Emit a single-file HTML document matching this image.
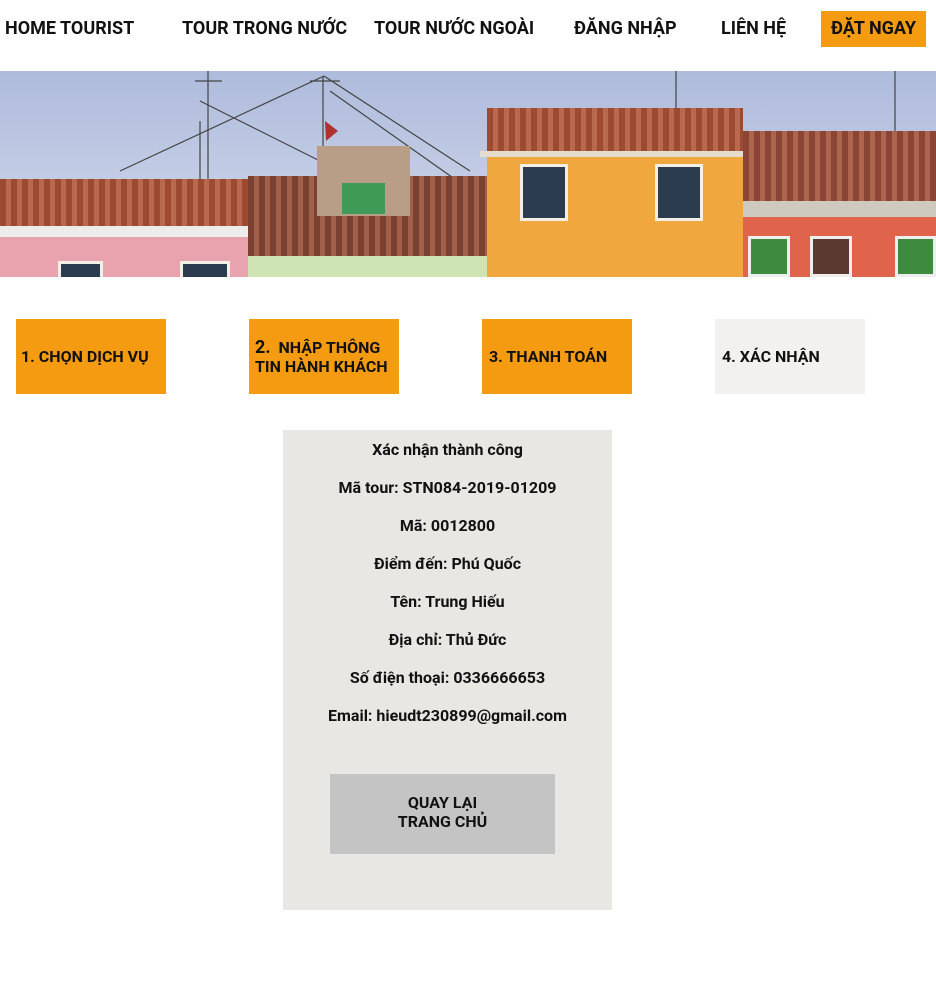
<!DOCTYPE html>
<html><head><meta charset="utf-8"><style>
*{margin:0;padding:0;box-sizing:border-box}
body{width:936px;height:1007px;background:#fff;font-family:"Roboto","Liberation Sans",sans-serif;font-weight:bold;color:#111;position:relative;overflow:hidden}
.a{position:absolute}
.nav{font-size:18px;top:18px;white-space:nowrap}
.step{position:absolute;top:319px;width:150px;height:75px;background:#f49b12;font-size:16px;display:flex;align-items:center;padding-left:5px;line-height:19px}
.card p{text-align:center;font-size:16px;height:38px;line-height:38px}
.roof{background:repeating-linear-gradient(90deg,#9c4a32 0 6px,#b96a4e 6px 11px),#a45a40}
</style></head><body>
<div class="a nav" style="left:5px">HOME TOURIST</div>
<div class="a nav" style="left:182px">TOUR TRONG NƯỚC</div>
<div class="a nav" style="left:374px">TOUR NƯỚC NGOÀI</div>
<div class="a nav" style="left:574px">ĐĂNG NHẬP</div>
<div class="a nav" style="left:721px">LIÊN HỆ</div>
<div class="a" style="left:821px;top:11px;width:105px;height:36px;background:#f49b12;font-size:18px;line-height:36px;text-align:center">ĐẶT NGAY</div>

<div class="a" style="left:0;top:71px;width:936px;height:206px;overflow:hidden;background:linear-gradient(#aebbdb,#d5dcee)">
 <svg class="a" style="left:0;top:0" width="936" height="206"><g stroke="#444" stroke-width="1.2" fill="none"><path d="M208 0V108M195 10H222M200 50V108M323 5V108M310 10H340M324 5L120 100M324 5L470 100M330 20L500 140M200 30L320 90"/><path d="M676 0V40M895 0V60"/></g><path d="M325 50L338 60L326 70Z" fill="#b03030"/></svg>
 <div class="a roof" style="left:0;top:108px;width:265px;height:47px"></div>
 <div class="a" style="left:0;top:155px;width:250px;height:11px;background:#ececec"></div>
 <div class="a" style="left:0;top:166px;width:250px;height:40px;background:#e8a3ae"></div>
 <div class="a" style="left:58px;top:190px;width:45px;height:20px;background:#2a3c4e;border:3px solid #f4efe6"></div>
 <div class="a" style="left:180px;top:190px;width:50px;height:20px;background:#2a3c4e;border:3px solid #f4efe6"></div>
 <div class="a roof" style="left:248px;top:105px;width:239px;height:80px;background:repeating-linear-gradient(90deg,#7a4030 0 6px,#a0604a 6px 11px)"></div>
 <div class="a" style="left:248px;top:185px;width:239px;height:21px;background:#cfe4b4"></div>
 <div class="a" style="left:317px;top:75px;width:93px;height:70px;background:#b89e86"></div>
 <div class="a" style="left:342px;top:112px;width:43px;height:31px;background:#3f9a55"></div>
 <div class="a roof" style="left:487px;top:37px;width:256px;height:46px"></div>
 <div class="a" style="left:480px;top:80px;width:270px;height:6px;background:#e4dccc"></div>
 <div class="a" style="left:487px;top:86px;width:256px;height:120px;background:#f0a83e"></div>
 <div class="a" style="left:520px;top:93px;width:48px;height:57px;background:#2a3c4e;border:3px solid #f4efe6"></div>
 <div class="a" style="left:655px;top:93px;width:48px;height:57px;background:#2a3c4e;border:3px solid #f4efe6"></div>
 <div class="a roof" style="left:743px;top:60px;width:193px;height:70px;background:repeating-linear-gradient(90deg,#8a4534 0 6px,#ad6550 6px 11px)"></div>
 <div class="a" style="left:743px;top:130px;width:193px;height:16px;background:#cfcac0"></div>
 <div class="a" style="left:743px;top:146px;width:193px;height:60px;background:#e0634c"></div>
 <div class="a" style="left:748px;top:165px;width:42px;height:41px;background:#3e8a3e;border:3px solid #eee"></div>
 <div class="a" style="left:810px;top:165px;width:42px;height:41px;background:#5a3a30;border:3px solid #eee"></div>
 <div class="a" style="left:895px;top:165px;width:41px;height:41px;background:#3e8a3e;border:3px solid #eee"></div>
</div>

<div class="step" style="left:16px">1. CHỌN DỊCH VỤ</div>
<div class="step" style="left:249px;padding-left:6px"><span><span style="font-size:18px">2.</span>&nbsp; NHẬP THÔNG<br>TIN HÀNH KHÁCH</span></div>
<div class="step" style="left:482px;padding-left:7px">3. THANH TOÁN</div>
<div class="step" style="left:715px;background:#f2f1ef;padding-left:7px">4. XÁC NHẬN</div>

<div class="a card" style="left:283px;top:430px;width:329px;height:480px;background:#e8e7e3">
<p style="margin-top:1px">Xác nhận thành công</p>
<p>Mã tour: STN084-2019-01209</p>
<p>Mã: 0012800</p>
<p>Điểm đến: Phú Quốc</p>
<p>Tên: Trung Hiếu</p>
<p>Địa chỉ: Thủ Đức</p>
<p>Số điện thoại: 0336666653</p>
<p>Email: hieudt230899@gmail.com</p>
</div>
<div class="a" style="left:330px;top:774px;width:225px;height:80px;background:#c4c4c4;font-size:16px;text-align:center;padding-top:19px;line-height:19px">QUAY LẠI<br>TRANG CHỦ</div>
</body></html>
